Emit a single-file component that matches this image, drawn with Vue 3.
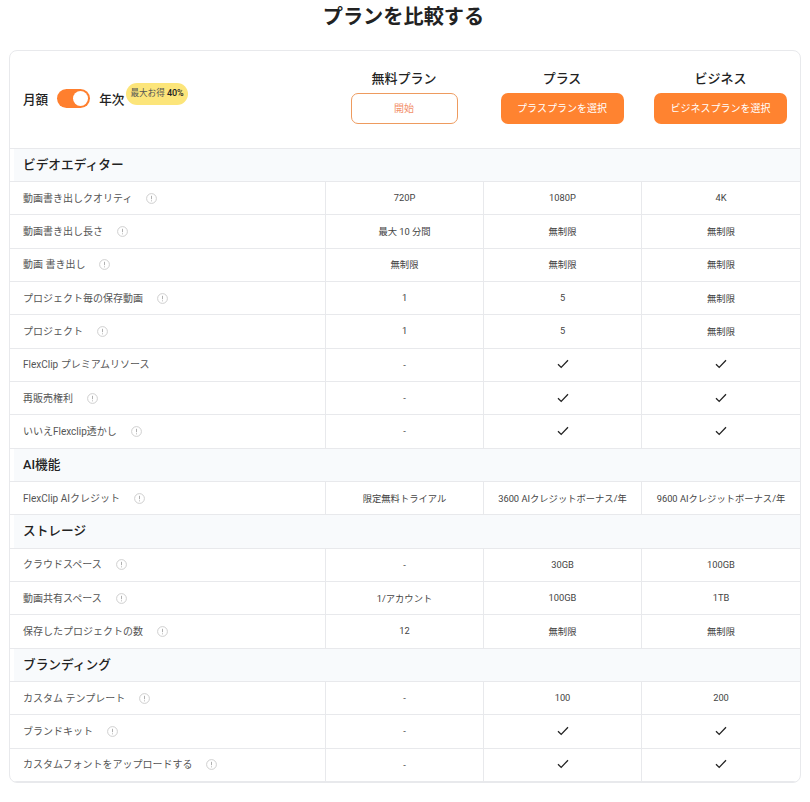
<script setup>
const check = '✓'
const sections = [
  { title: 'ビデオエディター', rows: [
    { label: '動画書き出しクオリティ', info: true, v: ['720P', '1080P', '4K'] },
    { label: '動画書き出し長さ', info: true, v: ['最大 10 分間', '無制限', '無制限'] },
    { label: '動画 書き出し', info: true, v: ['無制限', '無制限', '無制限'] },
    { label: 'プロジェクト毎の保存動画', info: true, v: ['1', '5', '無制限'] },
    { label: 'プロジェクト', info: true, v: ['1', '5', '無制限'] },
    { label: 'FlexClip プレミアムリソース', info: false, v: ['-', check, check] },
    { label: '再販売権利', info: true, v: ['-', check, check] },
    { label: 'いいえFlexclip透かし', info: true, v: ['-', check, check] },
  ]},
  { title: 'AI機能', rows: [
    { label: 'FlexClip AIクレジット', info: true, v: ['限定無料トライアル', '3600 AIクレジットボーナス/年', '9600 AIクレジットボーナス/年'] },
  ]},
  { title: 'ストレージ', rows: [
    { label: 'クラウドスペース', info: true, v: ['-', '30GB', '100GB'] },
    { label: '動画共有スペース', info: true, v: ['1/アカウント', '100GB', '1TB'] },
    { label: '保存したプロジェクトの数', info: true, v: ['12', '無制限', '無制限'] },
  ]},
  { title: 'ブランディング', rows: [
    { label: 'カスタム テンプレート', info: true, v: ['-', '100', '200'] },
    { label: 'ブランドキット', info: true, v: ['-', check, check] },
    { label: 'カスタムフォントをアップロードする', info: true, v: ['-', check, check] },
  ]},
]
</script>

<template>
  <div class="page">
    <h1 class="title">プランを比較する</h1>
    <div class="card">
      <div class="head">
        <div class="billing">
          <span class="period">月額</span>
          <span class="toggle"><span class="knob"></span></span>
          <span class="period">年次</span>
          <span class="badge">最大お得 <b>40%</b></span>
        </div>
        <div class="plan">
          <div class="plan-name">無料プラン</div>
          <button class="btn ghost">開始</button>
        </div>
        <div class="plan">
          <div class="plan-name">プラス</div>
          <button class="btn solid plus">プラスプランを選択</button>
        </div>
        <div class="plan">
          <div class="plan-name">ビジネス</div>
          <button class="btn solid biz">ビジネスプランを選択</button>
        </div>
      </div>
      <template v-for="s in sections" :key="s.title">
        <div class="section"><div class="section-in">{{ s.title }}</div></div>
        <div v-for="r in s.rows" :key="r.label" class="row">
          <div class="label">
            <span>{{ r.label }}</span>
            <svg v-if="r.info" class="info" viewBox="0 0 11 11" width="11" height="11">
              <circle cx="5.5" cy="5.5" r="4.9" fill="none" stroke="#c9c9c9" stroke-width="0.9" />
              <path d="M5.5 2.8v3.4M5.5 7.4v.9" stroke="#a8a8a8" stroke-width="0.9" fill="none" />
            </svg>
          </div>
          <div v-for="(v, i) in r.v" :key="i" class="cell">
            <svg v-if="v === check" viewBox="0 0 12 10" width="12" height="10">
              <path d="M1 5.2 4.2 8.4 11 1.2" fill="none" stroke="#222" stroke-width="1.3" />
            </svg>
            <template v-else>{{ v }}</template>
          </div>
        </div>
      </template>
    </div>
  </div>
</template>

<style scoped>
.page {
  width: 810px;
  height: 802px;
  overflow: hidden;
  background: #fff;
  font-family: Roboto, "Noto Sans CJK JP", sans-serif;
  color: #333;
}
.title {
  margin: 0;
  height: 50px;
  padding: 3px 3px 0 0;
  box-sizing: border-box;
  text-align: center;
  font-size: 20.2px;
  line-height: 28px;
  font-weight: 700;
  color: #222;
}
.card {
  margin-left: 9px;
  width: 792px;
  height: 733px;
  box-sizing: border-box;
  border: 1px solid #e8e9ec;
  border-radius: 8px;
  overflow: hidden;
}
.head {
  display: grid;
  grid-template-columns: 315px 158px 158px 159px;
  height: 97.7px;
  border-bottom: 1px solid #e8e9ec;
  box-sizing: border-box;
}
.billing {
  display: flex;
  align-items: center;
  padding-left: 13px;
  padding-bottom: 2px;
}
.period {
  font-size: 12.6px;
  font-weight: 500;
  color: #222;
}
.toggle {
  width: 33px;
  height: 19px;
  margin: 0 9px;
  border-radius: 10px;
  background: #ff7f2e;
  display: flex;
  justify-content: flex-end;
  align-items: center;
  padding-right: 2px;
  box-sizing: border-box;
}
.knob {
  width: 15px;
  height: 15px;
  border-radius: 50%;
  background: #fff;
}
.badge {
  align-self: flex-start;
  margin-top: 32px;
  margin-left: 2px;
  padding: 0 4px;
  height: 22px;
  line-height: 20px;
  border-radius: 11px;
  background: #fce57a;
  font-size: 8.6px;
  color: #555;
  white-space: nowrap;
}
.badge b {
  font-size: 9px;
  font-weight: 500;
  color: #222;
}
.plan {
  display: flex;
  flex-direction: column;
  align-items: center;
  padding-top: 18px;
}
.plan-name {
  font-size: 13px;
  line-height: 20px;
  font-weight: 500;
  color: #222;
  margin-bottom: 4px;
}
.btn {
  height: 31px;
  border-radius: 7px;
  font-family: inherit;
  font-size: 10px;
  padding: 0 0 2px;
}
.ghost {
  width: 107px;
  background: #fff;
  border: 1px solid #ee9b5f;
  color: #f2906a;
}
.solid {
  border: none;
  background: #ff8330;
  color: #fff;
}
.plus { width: 123px; }
.biz { width: 133px; }
.section {
  height: 33.33px;
  box-sizing: border-box;
  border-bottom: 1px solid #e8e9ec;
  padding-left: 4px;
}
.section-in {
  height: 100%;
  box-sizing: border-box;
  background: #f8fafc;
  padding: 0 0 3px 9px;
  display: flex;
  align-items: center;
  font-size: 12.7px;
  font-weight: 500;
  color: #222;
}
.row {
  display: grid;
  grid-template-columns: 315px 158px 158px 159px;
  height: 33.33px;
  box-sizing: border-box;
  border-bottom: 1px solid #e8e9ec;
}
.label {
  display: flex;
  align-items: center;
  gap: 14px;
  padding-left: 13px;
  padding-bottom: 2px;
  font-size: 10px;
  color: #555;
}
.info {
  flex: none;
  margin-top: 2px;
}
.cell {
  display: flex;
  align-items: center;
  justify-content: center;
  border-left: 1px solid #e8e9ec;
  padding-bottom: 1px;
  font-size: 9.3px;
  color: #444;
  white-space: nowrap;
}
</style>
